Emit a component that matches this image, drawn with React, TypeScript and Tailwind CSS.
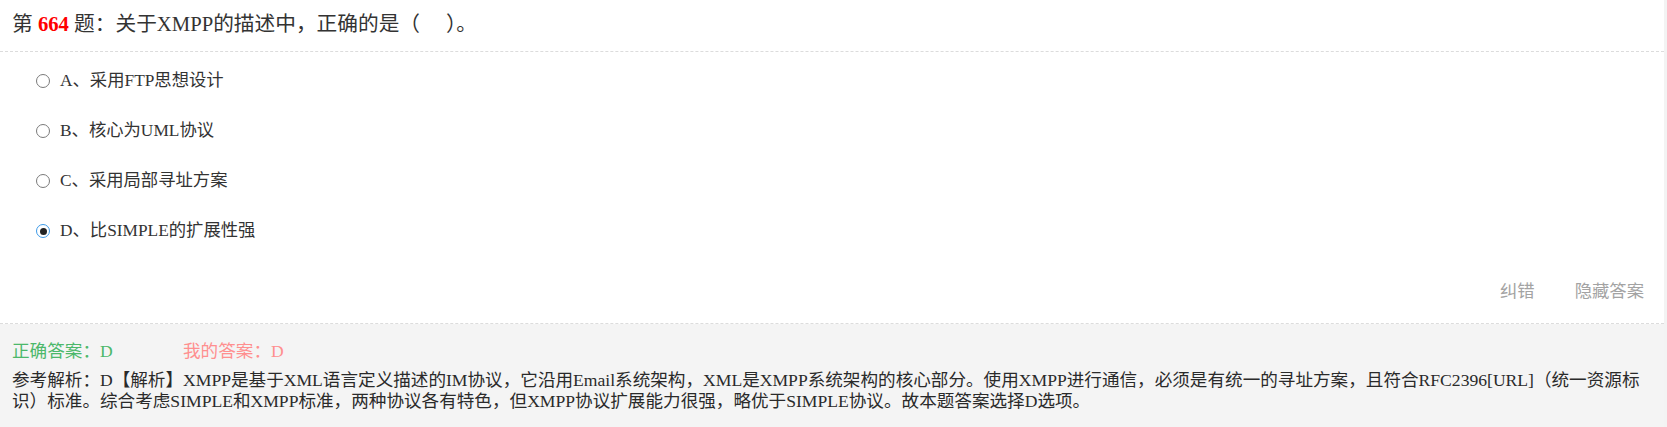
import React from "react";

const FONT = '"Liberation Serif", "Noto Sans CJK SC", serif';

function Radio({ checked }: { checked?: boolean }) {
  return (
    <span
      className={
        "inline-flex items-center justify-center w-[14px] h-[14px] rounded-full border bg-white shrink-0 " +
        (checked ? "border-[#3d9ae8]" : "border-[#7a7a7a]")
      }
    >
      {checked && <span className="block w-[7px] h-[7px] rounded-full bg-[#222]" />}
    </span>
  );
}

const options = [
  { key: "A", text: "采用FTP思想设计" },
  { key: "B", text: "核心为UML协议" },
  { key: "C", text: "采用局部寻址方案" },
  { key: "D", text: "比SIMPLE的扩展性强", checked: true },
];

export default function App() {
  return (
    <div className="w-[1667px] h-[427px] bg-[#f3f3f3] overflow-hidden" style={{ fontFamily: FONT }}>
      <div className="w-[1664px] h-full bg-white flex flex-col">
        <div className="h-[52px] border-b border-dashed border-[#dcdcdc] pl-[12px] pt-[10px] text-[20.7px] leading-[28px] text-[#333]">
          第 <span className="text-[#ff0000] font-bold">664</span> 题：关于XMPP的描述中，正确的是（&nbsp;&nbsp;&nbsp;&nbsp;&nbsp;）。
        </div>
        <div className="pt-[4px] flex flex-col">
          {options.map((o) => (
            <label key={o.key} className="h-[50px] flex items-center pl-[36px] text-[17.33px] text-[#333]">
              <Radio checked={o.checked} />
              <span className="ml-[10px]">
                {o.key}、{o.text}
              </span>
            </label>
          ))}
        </div>
        <div className="h-[68px] flex items-center justify-end pr-[20px] gap-[40px] text-[17.33px] text-[#a3a3a3] border-b border-dashed border-[#dcdcdc] pt-[4px]">
          <span>纠错</span>
          <span>隐藏答案</span>
        </div>
        <div className="flex-1 bg-[#f4f4f4] px-[12px] pt-[16px]">
          <div className="flex text-[17.6px] leading-[22px]">
            <span className="text-[#4cb86a] w-[171px]">正确答案：D</span>
            <span className="text-[#ff8f8f]">我的答案：D</span>
          </div>
          <p className="mt-[8px] text-[17.6px] leading-[21px] text-[#2a2a2a]">
            参考解析：D【解析】XMPP是基于XML语言定义描述的IM协议，它沿用Email系统架构，XML是XMPP系统架构的核心部分。使用XMPP进行通信，必须是有统一的寻址方案，且符合RFC2396[URL]（统一资源标
            <br />
            识）标准。综合考虑SIMPLE和XMPP标准，两种协议各有特色，但XMPP协议扩展能力很强，略优于SIMPLE协议。故本题答案选择D选项。
          </p>
        </div>
      </div>
    </div>
  );
}
